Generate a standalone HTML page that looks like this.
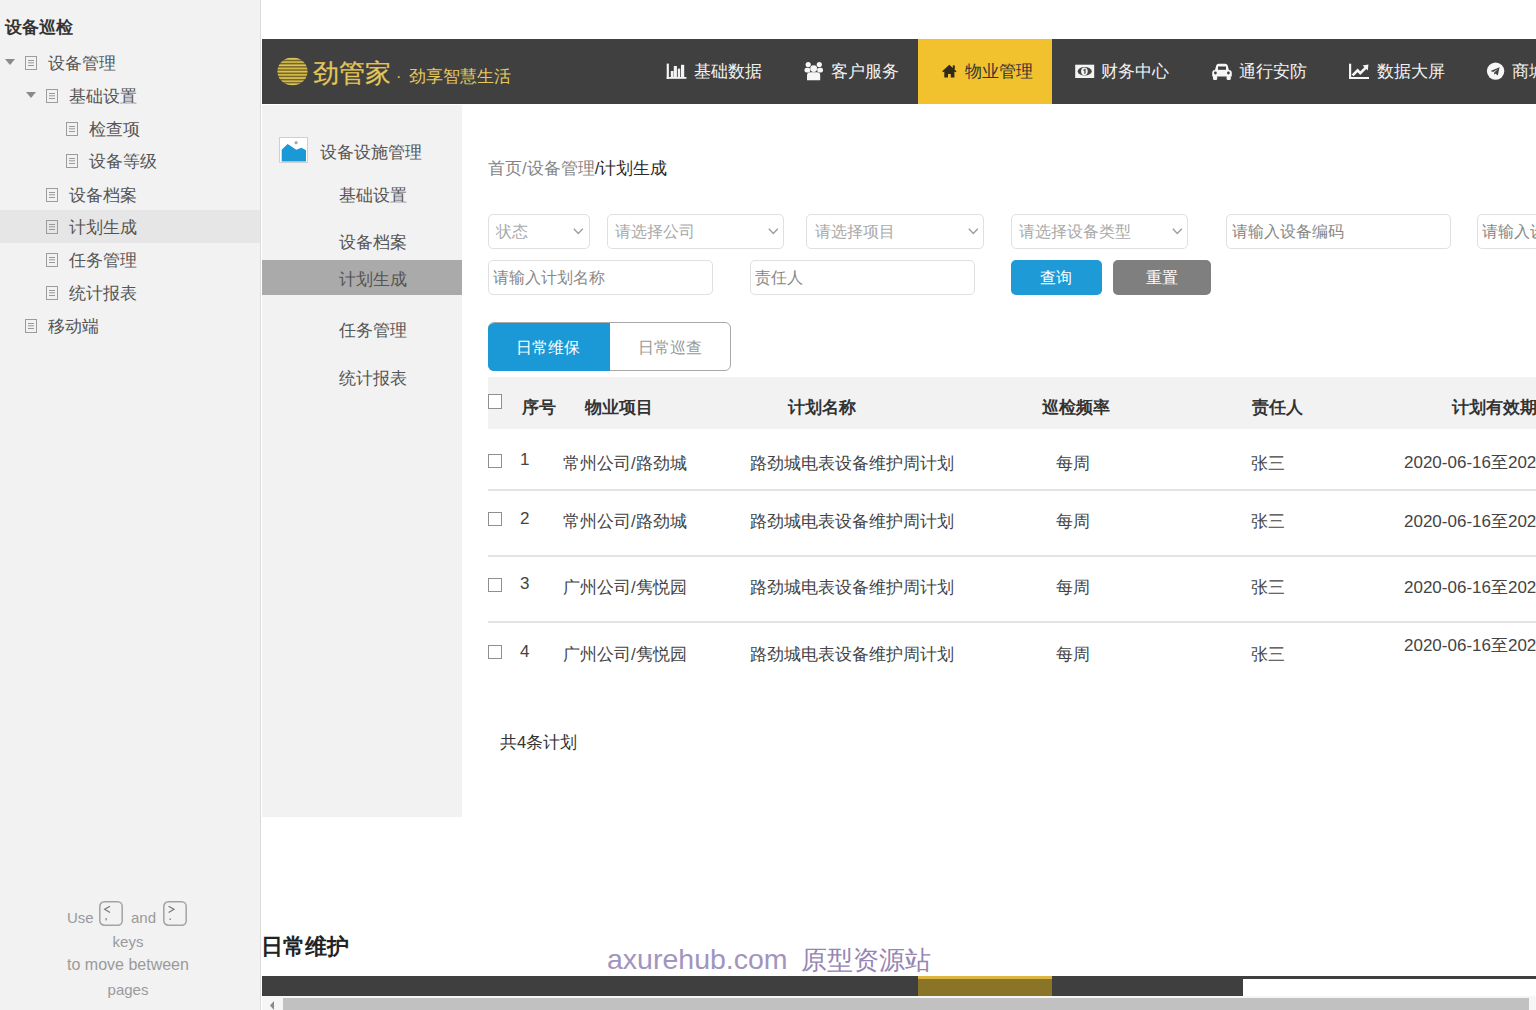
<!DOCTYPE html>
<html><head><meta charset="utf-8">
<style>
*{box-sizing:border-box;margin:0;padding:0}
html,body{width:1536px;height:1010px;overflow:hidden;background:#fff;font-family:"Liberation Sans",sans-serif}
.a{position:absolute;line-height:1;white-space:nowrap}
#side{position:absolute;left:0;top:0;width:261px;height:1010px;background:#f2f2f2;border-right:1px solid #dcdcdc}
.tri{position:absolute;width:0;height:0;border-left:5px solid transparent;border-right:5px solid transparent;border-top:6px solid #8a8a8a}
.pg{position:absolute;width:12px;height:14px;border:1.3px solid #9c9c9c}
.pg:before{content:"";position:absolute;left:2px;top:3px;width:6px;height:1px;background:#999;box-shadow:0 2.3px 0 #999,0 5px 0 #999}
.st{font-size:16.8px;color:#555}
#nav{position:absolute;left:262px;top:39px;width:1274px;height:65px;background:#404040}
.nt{font-size:16.8px;color:#f2f2f2;margin-top:1px}
#sub{position:absolute;left:262px;top:105px;width:200px;height:712px;background:#f2f2f2}
.sn{font-size:16.8px;color:#555}
.inp{position:absolute;height:35px;border:1px solid #e0e0e0;border-radius:5px;background:#fff}
.ph{font-size:16px;color:#aaa}
.chev{position:absolute;width:7px;height:7px;border-right:1.5px solid #777;border-bottom:1.5px solid #777;transform:rotate(45deg)}
.cb{position:absolute;width:14px;height:14px;border:1px solid #8f8f8f;background:#fff}
.th{font-size:16.8px;color:#333;font-weight:bold;margin-top:0.7px}
.td{font-size:16.8px;color:#444}
.sep{position:absolute;left:488px;width:1048px;height:2px;background:#e4e4e4}
</style></head><body>

<!-- left sidebar -->
<div id="side">
  <div class="a" style="left:5px;top:19px;font-size:17px;font-weight:bold;color:#333">设备巡检</div>
  <div style="position:absolute;left:0;top:210px;width:260px;height:33px;background:#e6e6e6"></div>
  <div class="tri" style="left:5px;top:59px"></div>
  <div class="pg" style="left:25px;top:56px"></div>
  <div class="a st" style="left:48px;top:56px">设备管理</div>
  <div class="tri" style="left:26px;top:92px"></div>
  <div class="pg" style="left:46px;top:89px"></div>
  <div class="a st" style="left:69px;top:89px">基础设置</div>
  <div class="pg" style="left:66px;top:122px"></div>
  <div class="a st" style="left:89px;top:122px">检查项</div>
  <div class="pg" style="left:66px;top:154px"></div>
  <div class="a st" style="left:89px;top:154px">设备等级</div>
  <div class="pg" style="left:46px;top:188px"></div>
  <div class="a st" style="left:69px;top:188px">设备档案</div>
  <div class="pg" style="left:46px;top:220px"></div>
  <div class="a st" style="left:69px;top:220px">计划生成</div>
  <div class="pg" style="left:46px;top:253px"></div>
  <div class="a st" style="left:69px;top:253px">任务管理</div>
  <div class="pg" style="left:46px;top:286px"></div>
  <div class="a st" style="left:69px;top:286px">统计报表</div>
  <div class="pg" style="left:25px;top:319px"></div>
  <div class="a st" style="left:48px;top:319px">移动端</div>

  <div class="a" style="left:67px;top:910px;font-size:15px;color:#9a9a9a">Use</div>
  <svg style="position:absolute;left:99px;top:901px" width="24" height="25" viewBox="0 0 24 25"><rect x="0.8" y="0.8" width="22.4" height="23.4" rx="4.5" fill="none" stroke="#a3a3a3" stroke-width="1.5"/>
<path d="M11 5.2 L5.6 8.3 L11 11.4" fill="none" stroke="#777" stroke-width="1.2"/><rect x="6.5" y="17" width="1.3" height="2.4" fill="#888"/></svg>
  <div class="a" style="left:131px;top:910px;font-size:15px;color:#9a9a9a">and</div>
  <svg style="position:absolute;left:163px;top:901px" width="24" height="25" viewBox="0 0 24 25"><rect x="0.8" y="0.8" width="22.4" height="23.4" rx="4.5" fill="none" stroke="#a3a3a3" stroke-width="1.5"/>
<path d="M5.6 5.2 L11 8.3 L5.6 11.4" fill="none" stroke="#777" stroke-width="1.2"/><rect x="6.5" y="17.5" width="1.5" height="1.5" fill="#888"/></svg>
  <div class="a" style="left:0;width:256px;text-align:center;top:933.7px;font-size:15px;color:#9a9a9a">keys</div>
  <div class="a" style="left:0;width:256px;text-align:center;top:957.3px;font-size:16px;color:#9a9a9a">to move between</div>
  <div class="a" style="left:0;width:256px;text-align:center;top:981.8px;font-size:15px;color:#9a9a9a">pages</div>
</div>

<!-- top nav -->
<div id="nav"></div>
<div style="position:absolute;left:918px;top:39px;width:134px;height:65px;background:#f2c12e"></div>
<svg style="position:absolute;left:277px;top:57px" width="31" height="29" viewBox="0 0 31 29">
<defs><clipPath id="lc"><ellipse cx="15.5" cy="14.4" rx="15" ry="14"/></clipPath></defs>
<g clip-path="url(#lc)"><rect width="31" height="29" fill="#7a6622"/>
<rect y="1" width="31" height="1.7" fill="#d9c660"/><rect y="4.2" width="31" height="1.7" fill="#cdb84f"/>
<rect y="7.4" width="31" height="1.7" fill="#d6c45a"/><rect y="10.6" width="31" height="1.7" fill="#d2bb4c"/>
<rect y="13.8" width="31" height="1.7" fill="#d9c256"/><rect y="17" width="31" height="1.7" fill="#cfb94d"/>
<rect y="20.2" width="31" height="1.7" fill="#d8c35a"/><rect y="23.4" width="31" height="1.7" fill="#cdb84f"/>
<rect y="26.4" width="31" height="1.7" fill="#d9c660"/></g></svg>
<div class="a" style="left:313px;top:60px;font-size:26px;color:#e6c95e;-webkit-text-stroke:0.3px #d9b648">劲管家</div>
<div class="a" style="left:396px;top:69px;font-size:16px;color:#e8c04a">·</div>
<div class="a" style="left:409px;top:68.5px;font-size:16.6px;color:#e6c95e">劲享智慧生活</div>


<svg style="position:absolute;left:666px;top:63px" width="21" height="16" viewBox="0 0 21 16" fill="#f4f4f4">
<rect x="0.7" y="0.6" width="2.2" height="15.2"/><rect x="0.7" y="14" width="19.7" height="1.8"/>
<rect x="4.8" y="8" width="2.7" height="6"/><rect x="7.8" y="3" width="3.1" height="11"/><rect x="11.8" y="5.6" width="2.4" height="8.4"/><rect x="15" y="1.8" width="3.2" height="12.2"/></svg>
<svg style="position:absolute;left:803px;top:60px" width="22" height="22" viewBox="0 0 22 22" fill="#f6f6f6">
<circle cx="5.2" cy="4.5" r="2.6"/><circle cx="16.3" cy="4.5" r="2.6"/>
<rect x="1.5" y="7.8" width="5.8" height="4.8" rx="2"/><rect x="14.2" y="7.8" width="5.8" height="4.8" rx="2"/>
<circle cx="10.7" cy="8.6" r="3.4"/><path d="M4 20.2 V15.5 Q4 12.2 7.5 12.2 H14 Q17.2 12.2 17.2 15.5 V20.2 Z"/></svg>
<svg style="position:absolute;left:942px;top:64px" width="15" height="14" viewBox="0 0 15 14" fill="#2f2a1a">
<path d="M7.3 0.8 L14.5 7.2 L13.4 8.3 L12.4 7.5 V13.4 H8.8 V10 H6 V13.4 H2.3 V7.5 L1.3 8.3 L0.2 7.2 Z"/><rect x="10.8" y="1.4" width="2" height="3.6"/></svg>
<svg style="position:absolute;left:1075px;top:64px" width="20" height="15" viewBox="0 0 20 15">
<rect x="0.2" y="0.7" width="19" height="13.3" fill="#f4f4f4"/><ellipse cx="9.7" cy="7.3" rx="7" ry="4.3" fill="#444"/><rect x="2.6" y="3" width="14.2" height="8.6" fill="none"/>
<ellipse cx="9.4" cy="7.3" rx="3.3" ry="3.9" fill="#f0f0f0"/><path d="M8.2 6 L9.6 4.8 H10.6 V9.8 H9.3 V6.4 L8.7 6.9 Z" fill="#4a4a4a"/></svg>
<svg style="position:absolute;left:1211px;top:63px" width="22" height="18" viewBox="0 0 22 18" fill="#f6f6f6">
<path d="M4 7 L5.3 2.2 Q5.8 0.7 7.5 0.7 H14.4 Q16.1 0.7 16.6 2.2 L17.9 7 Q20.8 7.2 20.8 10 V13.5 H1.2 V10 Q1.2 7.2 4 7 Z"/>
<rect x="2" y="12.5" width="4.2" height="4.6" rx="1.4"/><rect x="15.6" y="12.5" width="4.2" height="4.6" rx="1.4"/>
<rect x="7" y="3.5" width="8" height="3.3" fill="#404040"/><circle cx="4.4" cy="10" r="1.4" fill="#404040"/><circle cx="17.4" cy="10" r="1.4" fill="#404040"/></svg>
<svg style="position:absolute;left:1348px;top:63px" width="22" height="17" viewBox="0 0 22 17" fill="#f6f6f6">
<rect x="1" y="0.7" width="2.2" height="15.3"/><rect x="1" y="14" width="20" height="2"/>
<path d="M4.6 12.4 L9.6 7.4 L12.3 10.1 L17.6 4.8" fill="none" stroke="#f6f6f6" stroke-width="2.6" stroke-linejoin="miter"/><path d="M14.6 2.4 L20.4 1.6 L19.8 7.4 Z"/></svg>
<svg style="position:absolute;left:1486px;top:62px" width="19" height="19" viewBox="0 0 19 19">
<circle cx="9.6" cy="9.1" r="8.7" fill="#f6f6f6"/><path d="M4.6 9 L13.6 5.3 L11.8 13.6 L9.3 11.4 L8 12.7 L8.2 10.6 L12.3 6.8 L7.2 10 Z" fill="#444"/></svg>
<div class="a nt" style="left:694px;top:63px">基础数据</div>
<div class="a nt" style="left:831px;top:63px">客户服务</div>
<div class="a nt" style="left:965px;top:63px;color:#333">物业管理</div>
<div class="a nt" style="left:1101px;top:63px">财务中心</div>
<div class="a nt" style="left:1239px;top:63px">通行安防</div>
<div class="a nt" style="left:1377px;top:63px">数据大屏</div>
<div class="a nt" style="left:1512px;top:63px">商城</div>

<!-- sub nav -->
<div id="sub"></div>
<div style="position:absolute;left:262px;top:260px;width:200px;height:35px;background:#aaaaaa"></div>
<svg style="position:absolute;left:279px;top:137px" width="29" height="26" viewBox="0 0 29 26">
<rect x="0.5" y="0.5" width="28" height="25" fill="#fff" stroke="#d0d0d0"/>
<circle cx="17.1" cy="5.7" r="1.6" fill="#aaa"/>
<path d="M2.7 12.8 L8.6 7.1 L17.3 12.8 L22.5 10.7 L27 13.2 V24.6 H2.7 Z" fill="#1b98d6"/></svg>
<div class="a sn" style="left:320px;top:145px">设备设施管理</div>
<div class="a sn" style="left:339px;top:188px">基础设置</div>
<div class="a sn" style="left:339px;top:235px">设备档案</div>
<div class="a sn" style="left:339px;top:272px">计划生成</div>
<div class="a sn" style="left:339px;top:323px">任务管理</div>
<div class="a sn" style="left:339px;top:371px">统计报表</div>

<!-- breadcrumb -->
<div class="a" style="left:488px;top:161px;font-size:16.8px;color:#858585">首页/设备管理<span style="color:#2a2a2a">/计划生成</span></div>

<!-- filters -->
<div class="inp" style="left:488px;top:214px;width:102px"></div>
<div class="a ph" style="left:496px;top:224px">状态</div>
<div class="inp" style="left:607px;top:214px;width:177px"></div>
<div class="a ph" style="left:615px;top:224px">请选择公司</div>
<div class="inp" style="left:806px;top:214px;width:178px"></div>
<div class="a ph" style="left:815px;top:224px">请选择项目</div>
<div class="inp" style="left:1011px;top:214px;width:177px"></div>
<div class="a ph" style="left:1019px;top:224px">请选择设备类型</div>
<svg style="position:absolute;left:573px;top:228px" width="11" height="7" viewBox="0 0 11 7"><path d="M0.8 0.8 L5.3 5.6 L9.8 0.8" fill="none" stroke="#9d9d9d" stroke-width="1.4"/></svg>
<svg style="position:absolute;left:768px;top:228px" width="11" height="7" viewBox="0 0 11 7"><path d="M0.8 0.8 L5.3 5.6 L9.8 0.8" fill="none" stroke="#9d9d9d" stroke-width="1.4"/></svg>
<svg style="position:absolute;left:968px;top:228px" width="11" height="7" viewBox="0 0 11 7"><path d="M0.8 0.8 L5.3 5.6 L9.8 0.8" fill="none" stroke="#9d9d9d" stroke-width="1.4"/></svg>
<svg style="position:absolute;left:1172px;top:228px" width="11" height="7" viewBox="0 0 11 7"><path d="M0.8 0.8 L5.3 5.6 L9.8 0.8" fill="none" stroke="#9d9d9d" stroke-width="1.4"/></svg>
<div class="inp" style="left:1226px;top:214px;width:225px"></div>
<div class="a ph" style="left:1232px;top:224px;color:#888">请输入设备编码</div>
<div class="inp" style="left:1477px;top:214px;width:100px"></div>
<div class="a ph" style="left:1482px;top:224px;color:#888">请输入设备</div>

<div class="inp" style="left:488px;top:260px;width:225px"></div>
<div class="a ph" style="left:493px;top:270px;color:#888">请输入计划名称</div>
<div class="inp" style="left:750px;top:260px;width:225px"></div>
<div class="a ph" style="left:755px;top:270px;color:#888">责任人</div>

<div style="position:absolute;left:1011px;top:260px;width:91px;height:35px;background:#1e9ad6;border-radius:5px"></div>
<div class="a" style="left:1040px;top:270px;font-size:16px;color:#fff">查询</div>
<div style="position:absolute;left:1113px;top:260px;width:98px;height:35px;background:#7f7f7f;border-radius:5px"></div>
<div class="a" style="left:1146px;top:270px;font-size:16px;color:#fff">重置</div>

<!-- tabs -->
<div style="position:absolute;left:488px;top:322px;width:243px;height:49px;border:1px solid #a9a9a9;border-radius:6px;background:#fff"></div>
<div style="position:absolute;left:488px;top:322.6px;width:122px;height:48px;background:#1b99d7;border-radius:6px 0 0 6px"></div>
<div class="a" style="left:515.5px;top:339.5px;font-size:15.5px;color:#fff">日常维保</div>
<div class="a" style="left:637.5px;top:339.5px;font-size:15.5px;color:#999">日常巡查</div>

<!-- table -->
<div style="position:absolute;left:488px;top:377px;width:1048px;height:52px;background:#f2f2f2"></div>
<div class="cb" style="left:488px;top:394px;height:15px"></div>
<div class="a th" style="left:522px;top:399px">序号</div>
<div class="a th" style="left:585px;top:399px">物业项目</div>
<div class="a th" style="left:788px;top:399px">计划名称</div>
<div class="a th" style="left:1042px;top:399px">巡检频率</div>
<div class="a th" style="left:1252px;top:399px">责任人</div>
<div class="a th" style="left:1452px;top:399px">计划有效期</div>

<div class="sep" style="top:489px"></div>
<div class="sep" style="top:555px"></div>
<div class="sep" style="top:621px"></div>

<div class="cb" style="left:488px;top:454px"></div>
<div class="a td" style="left:520px;top:451.1px;font-size:17px">1</div>
<div class="a td" style="left:563px;top:456px">常州公司/路劲城</div>
<div class="a td" style="left:750px;top:456px">路劲城电表设备维护周计划</div>
<div class="a td" style="left:1056px;top:456px">每周</div>
<div class="a td" style="left:1251px;top:456px">张三</div>
<div class="a td" style="left:1404px;top:454.4px;font-size:17px">2020-06-16至2020-07-16</div>

<div class="cb" style="left:488px;top:512px"></div>
<div class="a td" style="left:520px;top:509.7px;font-size:17px">2</div>
<div class="a td" style="left:563px;top:514px">常州公司/路劲城</div>
<div class="a td" style="left:750px;top:514px">路劲城电表设备维护周计划</div>
<div class="a td" style="left:1056px;top:514px">每周</div>
<div class="a td" style="left:1251px;top:514px">张三</div>
<div class="a td" style="left:1404px;top:513.2px;font-size:17px">2020-06-16至2020-07-16</div>

<div class="cb" style="left:488px;top:578px"></div>
<div class="a td" style="left:520px;top:574.9px;font-size:17px">3</div>
<div class="a td" style="left:563px;top:580px">广州公司/隽悦园</div>
<div class="a td" style="left:750px;top:580px">路劲城电表设备维护周计划</div>
<div class="a td" style="left:1056px;top:580px">每周</div>
<div class="a td" style="left:1251px;top:580px">张三</div>
<div class="a td" style="left:1404px;top:578.6px;font-size:17px">2020-06-16至2020-07-16</div>

<div class="cb" style="left:488px;top:645px"></div>
<div class="a td" style="left:520px;top:642.6px;font-size:17px">4</div>
<div class="a td" style="left:563px;top:647px">广州公司/隽悦园</div>
<div class="a td" style="left:750px;top:647px">路劲城电表设备维护周计划</div>
<div class="a td" style="left:1056px;top:647px">每周</div>
<div class="a td" style="left:1251px;top:647px">张三</div>
<div class="a td" style="left:1404px;top:637.4px;font-size:17px">2020-06-16至2020-07-16</div>

<div class="a" style="left:500px;top:734px;font-size:16.5px;color:#333">共4条计划</div>

<!-- bottom -->
<div class="a" style="left:261px;top:937px;font-size:21.5px;font-weight:bold;color:#222">日常维护</div>
<div class="a" style="left:607px;top:945px;font-size:28.5px;color:#a294be">axurehub.com</div><div class="a" style="left:801px;top:946.5px;font-size:26px;color:#9585b4">原型资源站</div>
<div style="position:absolute;left:262px;top:976px;width:981px;height:20px;background:#3f3f3f"></div>
<div style="position:absolute;left:918px;top:976px;width:134px;height:20px;background:#8a7428;border-top:3px solid #dcb440"></div>
<div style="position:absolute;left:1243px;top:976px;width:293px;height:3px;background:#3f3f3f"></div>
<div style="position:absolute;left:262px;top:996px;width:1274px;height:14px;background:#f6f6f6"></div><svg style="position:absolute;left:268px;top:1000px" width="8" height="10" viewBox="0 0 8 10"><path d="M6 1 L2 5.5 L6 10 Z" fill="#8a8a8a"/></svg>
<div style="position:absolute;left:283px;top:998px;width:1246px;height:12px;background:#c1c1c1"></div>
</body></html>
